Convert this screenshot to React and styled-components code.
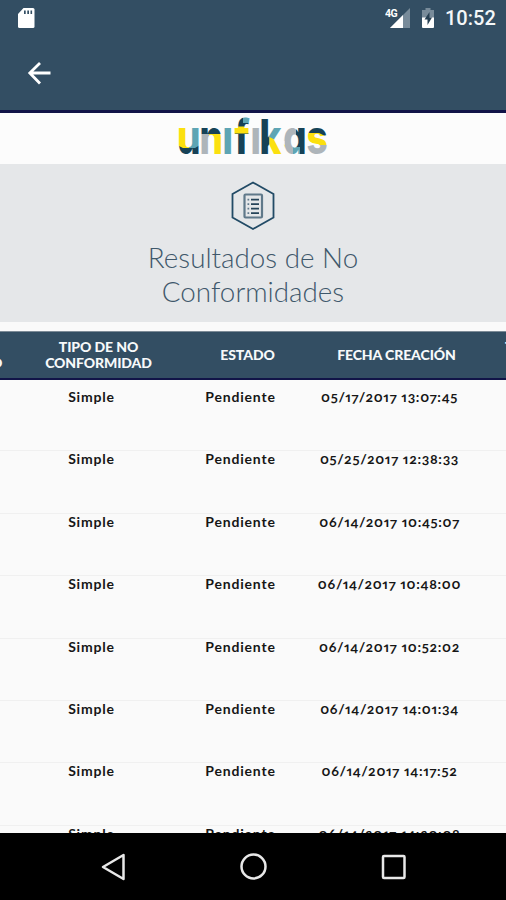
import styled, { createGlobalStyle } from "styled-components";

const GlobalStyle = createGlobalStyle`
  * {
    box-sizing: border-box;
  }

  body {
    margin: 0;
    background-color: #fafafa;
  }
`;

const Screen = styled.div`
  width: 506px;
  height: 900px;
  display: flex;
  flex-direction: column;
  overflow: hidden;
  background-color: #fafafa;
  font-family: "Lato", sans-serif;
`;

const TopBar = styled.header`
  flex: none;
  height: 113px;
  background-color: #334e63;
  border-bottom: 3px solid #111448;
`;

const StatusBar = styled.div`
  height: 36px;
  display: flex;
  align-items: center;
  justify-content: space-between;
  padding: 0 10px 0 17px;
`;

const StatusIcons = styled.div`
  display: flex;
  align-items: center;
  gap: 10px;
`;

const Clock = styled.span`
  width: 51px;
  color: #f4f7f9;
  font-family: "Roboto", sans-serif;
  font-size: 20px;
  font-weight: 500;
  line-height: 36px;
  white-space: nowrap;
`;

const BackButton = styled.button`
  display: flex;
  margin: 24px 0 0 26px;
  padding: 0;
  border: none;
  background: none;
`;

const Brand = styled.div`
  flex: none;
  height: 51px;
  display: flex;
  justify-content: center;
  background-color: #fcfcfc;
`;

const BrandName = styled.text`
  font-family: "Inter", sans-serif;
  font-size: 48px;
  font-weight: 800;
  font-feature-settings: "cv11";
`;

const Hero = styled.section`
  flex: none;
  height: 158px;
  display: flex;
  flex-direction: column;
  align-items: center;
  padding-top: 17px;
  background-color: #e5e7e9;
`;

const Title = styled.h1`
  width: 240px;
  margin: 10px 0 0;
  color: #3f586b;
  font-size: 27.8px;
  font-weight: 300;
  line-height: 33.5px;
  text-align: center;
`;

const Table = styled.main`
  flex: 1;
  min-height: 0;
  display: flex;
  flex-direction: column;
  padding-top: 9px;
  overflow: hidden;
`;

const TableHead = styled.div`
  flex: none;
  height: 49px;
  display: grid;
  grid-template-columns: 24px repeat(3, 149px) 35px;
  align-items: center;
  background-color: #334e63;
  border-top: 1px solid #7d8b97;
  border-bottom: 2px solid #111448;
  overflow: hidden;
`;

const HeadCell = styled.div`
  color: #f7f9fa;
  font-size: 14px;
  font-weight: 900;
  line-height: 16px;
  letter-spacing: -0.1px;
  text-align: center;
  white-space: pre-line;
`;

const EdgeCell = styled(HeadCell)`
  text-align: left;
  text-indent: ${(props) => props.$indent};
  padding: ${(props) => props.$padding};
`;

const Rows = styled.div`
  padding-top: 9px;
`;

const Row = styled.div`
  height: 62.4px;
  display: grid;
  grid-template-columns: repeat(3, 149px);
  padding-left: 17px;
  border-bottom: 1px solid #f0f0f0;
`;

const Cell = styled.div`
  color: #161616;
  font-size: 14px;
  font-weight: 700;
  line-height: 15px;
  letter-spacing: ${(props) => props.$spacing || "0.8px"};
  font-variant-numeric: oldstyle-nums proportional-nums;
  text-align: center;
  white-space: nowrap;
`;

const NavBar = styled.nav`
  flex: none;
  height: 67px;
  display: flex;
  align-items: center;
  justify-content: space-between;
  padding: 0 98px 0 99px;
  background-color: #000;
`;

const dates = [
  "05/17/2017 13:07:45",
  "05/25/2017 12:38:33",
  "06/14/2017 10:45:07",
  "06/14/2017 10:48:00",
  "06/14/2017 10:52:02",
  "06/14/2017 14:01:34",
  "06/14/2017 14:17:52",
  "06/14/2017 14:20:08",
];

// the brand name is set condensed, one start position per letter
const brandScale = 0.77;
const brandPositions = [0, 22.5, 45.5, 57.5, 73.5, 82.5, 106, 129.5]
  .map((x) => (x / brandScale).toFixed(2))
  .join(" ");

function SdCard() {
  return (
    <svg width="19" height="22" viewBox="0 0 19 22">
      <path d="M6.5 1H16q1.5 0 1.5 1.5v17q0 1.5-1.5 1.5H2.5Q1 21 1 19.5V7z" fill="#fff" />
      <path d="M7 3.5h1.7V7H7zM10.3 3.5H12V7h-1.7zM13.5 3.5h1.6V7h-1.6z" fill="#334e63" />
    </svg>
  );
}

function Signal() {
  return (
    <svg width="26" height="22" viewBox="0 0 26 22">
      <path d="M5 21 25 1V21z" fill="#788b9a" />
      <path d="M5 21 18 8V21z" fill="#fff" />
      <text
        x="0"
        y="9.5"
        fontFamily="Roboto, sans-serif"
        fontSize="10.5"
        fontWeight="700"
        letterSpacing="-0.5"
        fill="#fff"
        stroke="#334e63"
        strokeWidth="1.5"
        paintOrder="stroke"
      >
        4G
      </text>
    </svg>
  );
}

function Battery() {
  return (
    <svg width="14" height="22" viewBox="0 0 14 22">
      <path d="M4.5 1h5v2H13v8H1V3h3.5z" fill="#788b9a" />
      <path d="M1 10.5h12V20q0 1-1 1H2q-1 0-1-1z" fill="#fff" />
      <path d="M8.5 5 3.5 12.5h3V18l4.5-7.5H8.5z" fill="#263f52" />
    </svg>
  );
}

function BrandLogo() {
  return (
    <svg width="152" height="46" viewBox="0 0 152 46">
      <defs>
        <pattern
          id="brandColors"
          width="152"
          height="46"
          patternUnits="userSpaceOnUse"
          patternTransform={`scale(${1 / brandScale} 1)`}
        >
          <rect x="0" width="12" height="46" fill="#fbe00f" />
          <rect x="12" width="11" height="46" fill="#5ea5b4" />
          <path d="M0 32 6 35H18L23 32V46H0z" fill="#174257" />
          <rect x="23" width="9" height="46" fill="#aeb5ba" />
          <rect x="32" width="14" height="46" fill="#fbe00f" />
          <rect x="23" width="23" height="21" fill="#174257" />
          <rect x="46" y="13" width="11" height="33" fill="#5ea5b4" />
          <rect x="57" width="17" height="46" fill="#174257" />
          <rect x="66" width="8" height="10" fill="#5ea5b4" />
          <rect x="57" y="13.5" width="17" height="7" fill="#fbe00f" />
          <rect x="74" y="13" width="10" height="33" fill="#aeb5ba" />
          <rect x="84" width="8.5" height="46" fill="#174257" />
          <rect x="92.5" width="15" height="28" fill="#5ea5b4" />
          <path d="M92.5 24 108 32V46H92.5z" fill="#fbe00f" />
          <rect x="107.5" width="11.5" height="46" fill="#aeb5ba" />
          <rect x="119" width="11" height="46" fill="#174257" />
          <rect x="116" y="34" width="7" height="12" fill="#5ea5b4" />
          <rect x="130" width="22" height="46" fill="#174257" />
          <path d="M130 20H142L152 25V36H130z" fill="#fbe00f" />
          <rect x="130" y="32" width="22" height="14" fill="#aeb5ba" />
        </pattern>
      </defs>
      <BrandName x={brandPositions} y="40.5" transform={`scale(${brandScale} 1)`} fill="url(#brandColors)">
        unifikas
      </BrandName>
    </svg>
  );
}

function ListBadge() {
  return (
    <svg width="46" height="50" viewBox="0 0 46 50" fill="none">
      <path d="M23 1.5 43.5 13v23.500L23 48 2.500 36.500V13z" stroke="#224b66" strokeWidth="1.8" />
      <rect x="14.5" y="13.5" width="17.5" height="23" rx="1" stroke="#60798a" strokeWidth="2.2" />
      <path d="M21 18.7h8M21 23.2h8M21 27.7h8M21 32.2h8" stroke="#264459" strokeWidth="1.8" />
      <path d="M17.5 18.7h1.7M17.5 23.2h1.7M17.5 27.7h1.7M17.5 32.2h1.7" stroke="#60798a" strokeWidth="1.8" />
    </svg>
  );
}

function App() {
  return (
    <Screen>
      <GlobalStyle />
      <TopBar>
        <StatusBar>
          <SdCard />
          <StatusIcons>
            <Signal />
            <Battery />
            <Clock>10:52</Clock>
          </StatusIcons>
        </StatusBar>
        <BackButton aria-label="Back">
          <svg width="26" height="26" viewBox="0 0 26 26" fill="none" stroke="#fff" strokeWidth="2.8">
            <path d="M24.5 13H4M14 3 3.8 13 14 23.5" />
          </svg>
        </BackButton>
      </TopBar>
      <Brand>
        <BrandLogo />
      </Brand>
      <Hero>
        <ListBadge />
        <Title>Resultados de No Conformidades</Title>
      </Hero>
      <Table>
        <TableHead>
          <EdgeCell $indent="-9px" $padding="16px 0 0">O</EdgeCell>
          <HeadCell>{"TIPO DE NO\nCONFORMIDAD"}</HeadCell>
          <HeadCell>ESTADO</HeadCell>
          <HeadCell>FECHA CREACIÓN</HeadCell>
          <EdgeCell $indent="34px" $padding="0 0 16px">T</EdgeCell>
        </TableHead>
        <Rows>
          {dates.map((date) => (
            <Row key={date}>
              <Cell>Simple</Cell>
              <Cell>Pendiente</Cell>
              <Cell $spacing="0.7px">{date}</Cell>
            </Row>
          ))}
        </Rows>
      </Table>
      <NavBar>
        <svg width="28" height="30" viewBox="0 0 28 30" fill="none">
          <path d="M24.5 3v24L4 15z" stroke="#e8e8e8" strokeWidth="2.5" strokeLinejoin="round" />
        </svg>
        <svg width="30" height="30" viewBox="0 0 30 30" fill="none">
          <circle cx="14.5" cy="14.5" r="12" stroke="#e8e8e8" strokeWidth="2.5" />
        </svg>
        <svg width="28" height="28" viewBox="0 0 28 28" fill="none">
          <rect x="3" y="3" width="21.5" height="22" rx="1" stroke="#e8e8e8" strokeWidth="2.5" />
        </svg>
      </NavBar>
    </Screen>
  );
}

export default App;
